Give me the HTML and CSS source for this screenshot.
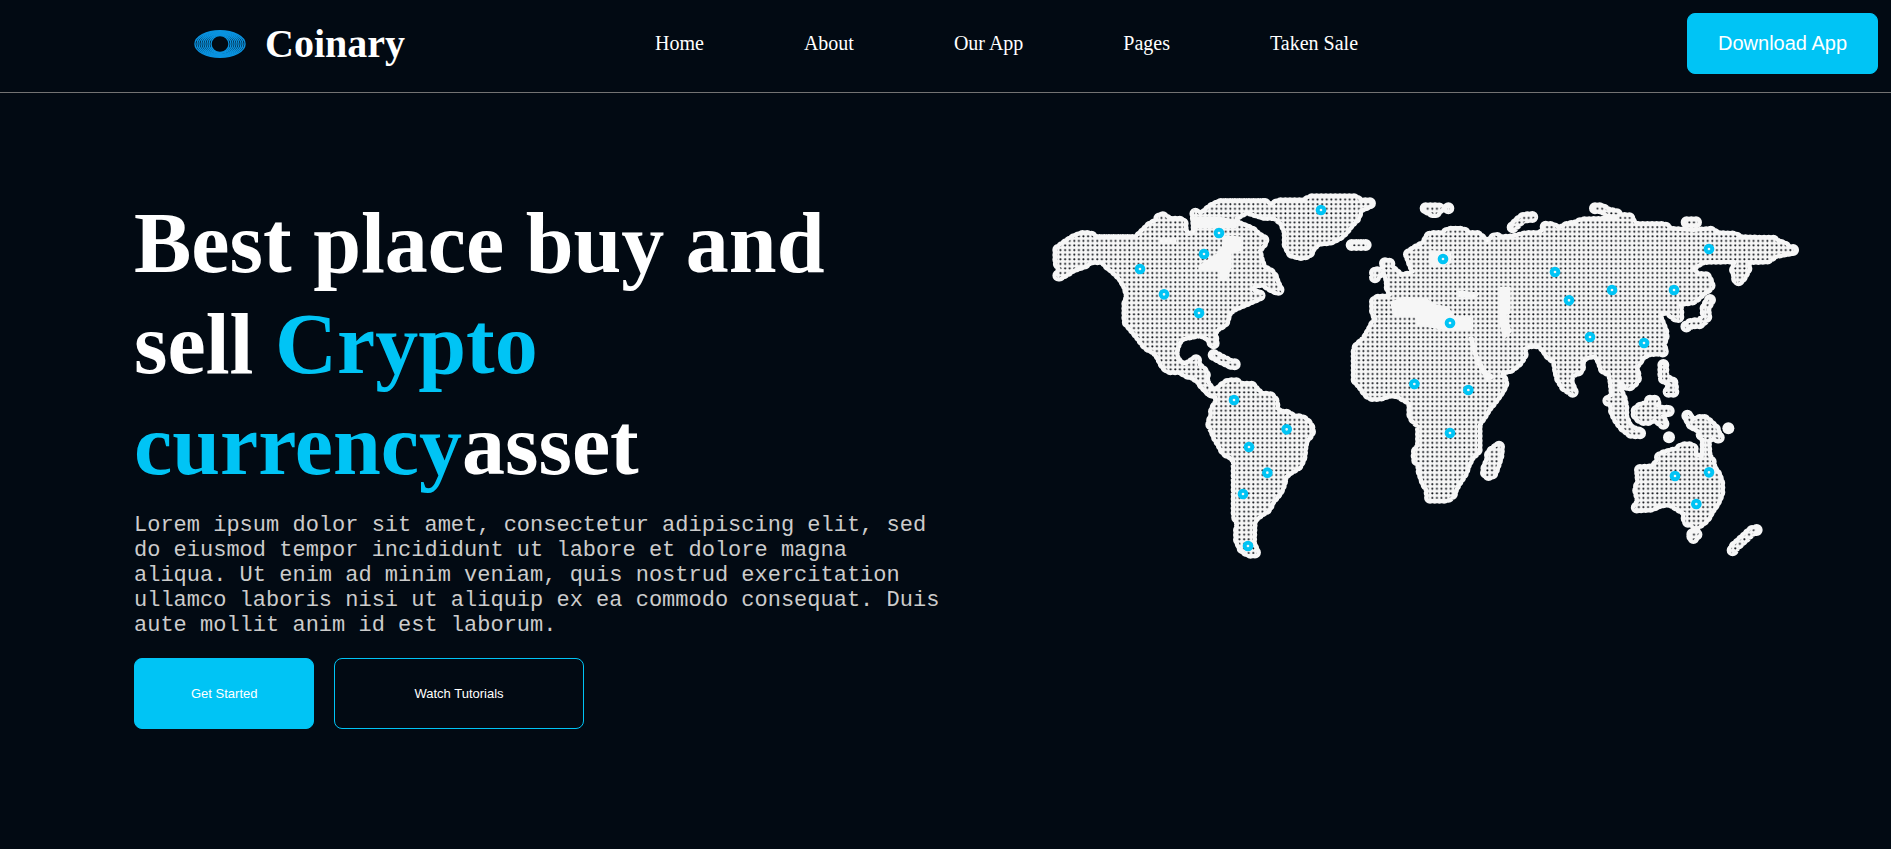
FILE: index.html
```html
<!DOCTYPE html>
<html lang="en">
<head>
<meta charset="utf-8">
<title>Coinary</title>
<link rel="stylesheet" href="styles.css">
</head>
<body>
<header class="header">
  <a class="brand" href="#">
    <svg class="brand-mark" viewBox="0 0 52 28" aria-hidden="true">
      <ellipse cx="26" cy="14" rx="9" ry="8.4"/>
      <ellipse cx="26" cy="14" rx="11" ry="9"/>
      <ellipse cx="26" cy="14" rx="13" ry="9.6"/>
      <ellipse cx="26" cy="14" rx="15" ry="10.2"/>
      <ellipse cx="26" cy="14" rx="17" ry="10.8"/>
      <ellipse cx="26" cy="14" rx="19" ry="11.4"/>
      <ellipse cx="26" cy="14" rx="21" ry="12"/>
      <ellipse cx="26" cy="14" rx="23" ry="12.6"/>
      <ellipse cx="26" cy="14" rx="25" ry="13.2"/>
    </svg>
    <span class="brand-name">Coinary</span>
  </a>
  <nav class="nav">
    <a href="#">Home</a>
    <a href="#">About</a>
    <a href="#">Our App</a>
    <a href="#">Pages</a>
    <a href="#">Taken Sale</a>
  </nav>
  <button class="btn btn-download" type="button">Download App</button>
</header>

<main class="hero">
  <section class="intro">
    <h1>Best place buy and sell <span class="accent">Crypto currency</span>asset</h1>
    <p>Lorem ipsum dolor sit amet, consectetur adipiscing elit, sed do eiusmod tempor incididunt ut labore et dolore magna aliqua. Ut enim ad minim veniam, quis nostrud exercitation ullamco laboris nisi ut aliquip ex ea commodo consequat. Duis aute mollit anim id est laborum.</p>
    <div class="actions">
      <button class="btn btn-start" type="button">Get Started</button>
      <button class="btn btn-watch" type="button">Watch Tutorials</button>
    </div>
  </section>

  <svg class="map" viewBox="3150 579 2256 1104" role="img" aria-label="World map">
    <defs>
      <pattern id="dots" x="3120" y="540" width="13.77" height="13.77" patternUnits="userSpaceOnUse">
        <circle cx="6.5" cy="3.6" r="3.1"/>
      </pattern>
      <g id="land">
        <!-- North America -->
        <g transform="translate(3120 540)">
          <path d="M55 209L97 180 124 168 152 168 165 180 290 180 305 165 318 153 332 138 358 126 358 112 372 112 385 125 428 125 428 153 442 172 468 168 470 140 466 98 480 112 500 98 512 86 540 72 675 72 675 105 650 98 620 88 580 110 580 128 600 140 635 153 650 168 673 182 662 195 650 210 655 235 665 265 690 280 700 292 705 310 717 332 690 320 670 305 640 310 625 325 640 342 660 346 633 358 600 372 575 383 560 400 552 428 530 440 515 457 521 480 521 495 510 470 480 457 455 462 425 468 410 485 400 515 405 540 425 560 440 560 455 550 468 540 470 560 485 570 495 582 492 605 502 620 515 638 490 615 480 600 460 585 440 580 420 568 385 568 372 553 358 525 345 510 320 498 300 470 275 440 262 425 262 370 270 350 262 320 248 295 235 280 222 268 205 255 190 238 150 238 135 250 100 262 80 275 52 291 68 268 55 250Z"/>
          <path d="M521 525L548 540 575 553 593 553"/>
        </g>
        <!-- Greenland, Iceland -->
        <g transform="translate(3750 540)">
          <path d="M45 72L60 85 85 70 165 70 180 58 320 58 325 70 360 70 325 85 322 100 318 112 300 130 285 150 270 165 240 180 205 182 185 200 175 222 150 225 125 218 113 195 113 155 100 125 75 105 40 105Z"/>
          <path d="M305 195H350"/>
        </g>
        <!-- South America -->
        <g transform="translate(3510 1080)">
          <path d="M98 65L112 85 125 98 145 95 160 80 175 70 205 70 205 80 245 80 258 97 275 110 300 110 313 125 313 150 330 163 355 165 370 178 395 178 410 190 420 205 420 220 405 235 398 255 395 290 385 315 360 330 340 345 335 370 325 395 312 410 300 425 292 445 275 455 255 470 245 485 243 550 255 578 235 578 218 565 207 540 207 510 212 490 200 470 200 300 185 285 165 275 155 255 140 230 130 205 122 190 132 170 132 150 148 125 145 105 120 95Z"/>
        </g>
        <!-- Europe, Africa, western Asia -->
        <g transform="translate(4020 570)">
          <path d="M207 193L230 178 255 165 270 138 310 138 325 125 370 125 385 138 415 138 440 165 460 150 465 140 480 150 520 148 560 138 600 138 617 125 617 110 640 112 655 125 668 118 720 110 720 540 690 550 685 575 698 605 675 590 660 565 655 545 650 510 630 498 615 475 600 460 565 460 545 470 548 495 535 515 510 535 480 540 475 565 490 570 490 585 475 610 460 630 440 655 425 680 410 700 410 780 390 800 375 830 372 845 355 870 340 895 335 915 320 923 270 923 268 895 257 880 245 845 243 815 230 810 230 785 243 770 243 705 217 680 217 635 190 620 175 610 150 608 120 618 90 618 75 600 65 585 50 570 50 475 78 450 95 420 105 400 120 388 105 370 105 330 150 327 165 312 150 300 148 280 165 275 190 262 215 258 240 240 225 240 215 215Z"/>
          <path d="M135 220L148 220 148 235 165 248 180 265 150 275 140 245Z"/>
          <path d="M105 248V262L118 245Z"/>
          <path d="M518 112L535 95 550 83 590 80"/>
          <path d="M257 55H298L285 70ZM325 55V68"/>
          <path d="M477 770L476 795 465 830 455 855 438 855 438 838 450 810 450 790Z"/>
        </g>
        <!-- Eastern Asia, Indonesia -->
        <g transform="translate(4680 570)">
          <path d="M20 111L50 105 65 97 145 95 215 97 225 111 290 111 315 111 330 125 400 130 455 125 470 138 525 140 540 150 590 152 640 152 655 165 670 165 685 180 700 180 645 190 625 205 600 207 555 207 560 235 545 262 532 275 530 250 525 240 535 215 525 205 430 207 400 225 385 235 410 260 440 262 450 290 430 300 410 320 395 330 370 332 345 340 355 355 355 385 340 375 325 360 300 360 290 375 300 400 312 430 310 445 300 465 312 485 290 482 265 485 245 495 230 520 215 525 225 545 228 565 218 580 203 590 190 565 170 575 175 605 185 625 190 650 190 680 200 705 215 722 245 730 215 730 190 710 175 690 162 665 162 640 145 632 165 620 163 600 160 570 155 545 133 540 125 515 110 488 75 495 45 525 28 545 20 500Z"/>
          <path d="M105 55L125 55 145 68 170 72 180 83 215 85"/>
          <path d="M380 97H412"/>
          <path d="M450 330L435 358 440 380 420 400 395 400 375 412" class="chain"/>
          <path d="M310 525V565L338 578 340 605 325 605 338 585"/>
          <path d="M230 662L245 650 265 648 270 632 290 632 280 650 300 662 330 662 295 672 312 703 285 680 265 690 245 690 230 675Z"/>
          <path d="M327 742h1"/>
        </g>
        <!-- Oceania -->
        <g transform="translate(4770 1020)">
          <path d="M292 227L305 252 325 240 345 240 358 252 375 268 380 285 390 297 370 285 350 295 335 285 335 268 310 255Z"/>
          <path d="M415 265h1"/>
          <path d="M150 390L190 388 210 365 210 350 240 340 265 335 275 322 308 322 308 352 345 362 347 322 347 300 350 350 362 365 365 385 380 405 388 430 388 460 375 490 360 510 350 530 335 545 318 557 305 545 290 545 290 515 265 500 240 485 210 488 185 500 140 503 153 485 143 445 153 430Z"/>
          <path d="M307 583H320L307 598Z"/>
          <path d="M500 570L485 573 460 597 440 615 428 625 428 640"/>
        </g>
      </g>
      <mask id="land-mask" maskUnits="userSpaceOnUse" x="3120" y="540" width="2320" height="1200">
        <use href="#land" class="mask-shape"/>
      </mask>
    </defs>
    <use href="#land" class="coast"/>
    <rect x="3120" y="540" width="2320" height="1200" class="dots" mask="url(#land-mask)"/>
    <!-- Inland seas and lakes without dots -->
    <g class="sea">
      <path transform="translate(3120 540)" d="M458 110L540 110 590 120 590 145 530 145 455 145ZM550 165L610 170 608 212 575 220 575 262 560 300 540 300 540 272 475 270 475 258 500 240 530 220 545 200ZM360 176H408V190H360Z"/>
      <path transform="translate(4020 570)" d="M150 335L190 320 262 325 275 340 325 350 345 380 400 380 400 420 320 422 230 405 225 382 160 378ZM350 300L420 308 408 325 350 322ZM478 290H512V370L500 375 515 425 490 450 478 400ZM385 440H400L412 490 440 545 470 560 440 575 405 515ZM270 180L335 185 335 220 280 235 265 215Z"/>
    </g>
    <g class="pins">
      <g transform="translate(3120 540)"><circle cx="537" cy="159" r="10"/><circle cx="492" cy="222" r="10"/><circle cx="300" cy="267" r="10"/><circle cx="372" cy="343" r="10"/><circle cx="477" cy="399" r="10"/></g>
      <g transform="translate(3750 540)"><circle cx="213" cy="90" r="10"/></g>
      <g transform="translate(4020 570)"><circle cx="309" cy="207" r="10"/><circle cx="645" cy="246" r="10"/><circle cx="687" cy="331" r="10"/><circle cx="330" cy="399" r="10"/><circle cx="223" cy="582" r="10"/><circle cx="385" cy="600" r="10"/><circle cx="330" cy="729" r="10"/></g>
      <g transform="translate(4680 570)"><circle cx="447" cy="177" r="10"/><circle cx="156" cy="300" r="10"/><circle cx="342" cy="300" r="10"/><circle cx="90" cy="441" r="10"/><circle cx="252" cy="459" r="10"/></g>
      <g transform="translate(3510 1080)"><circle cx="192" cy="120" r="10"/><circle cx="350" cy="208" r="10"/><circle cx="237" cy="261" r="10"/><circle cx="292" cy="338" r="10"/><circle cx="219" cy="402" r="10"/><circle cx="234" cy="558" r="10"/></g>
      <g transform="translate(4770 1020)"><circle cx="255" cy="408" r="10"/><circle cx="357" cy="397" r="10"/><circle cx="319" cy="492" r="10"/></g>
    </g>
  </svg>
</main>
</body>
</html>
```

FILE: styles.css
```css
* {
  box-sizing: border-box;
}

body {
  margin: 0;
  min-height: 100vh;
  background: #020a13;
  color: #fff;
  font-family: "Liberation Serif", "Times New Roman", serif;
}

.header {
  display: flex;
  align-items: center;
  padding: 13px 13px 18px 194px;
  border-bottom: 1px solid #737373;
}

.brand {
  display: flex;
  align-items: center;
  gap: 19px;
  color: #fff;
  text-decoration: none;
}

.brand-mark {
  width: 52px;
  height: 28px;
  fill: none;
  stroke: #0a93e0;
  stroke-width: 1.4;
}

.brand-name {
  font-size: 40px;
  font-weight: 700;
  line-height: 46px;
}

.nav {
  display: flex;
  gap: 100px;
  margin-left: 250px;
}

.nav a {
  color: #fff;
  font-size: 20px;
  text-decoration: none;
  white-space: nowrap;
}

.btn {
  border: 1px solid #00c4f5;
  border-radius: 8px;
  background: #00c4f5;
  color: #fff;
  font-family: "Liberation Sans", Arial, sans-serif;
  font-size: 13px;
  white-space: nowrap;
}

.btn-download {
  margin-left: auto;
  padding: 18px 30px;
  font-size: 20px;
}

.hero {
  display: flex;
  align-items: flex-start;
  justify-content: space-between;
  gap: 32px;
  padding: 100px 89px 64px 134px;
}

.intro {
  flex: 0 1 812px;
}

h1 {
  margin: 0 0 17px;
  font-size: 86px;
  font-weight: 700;
  line-height: 101px;
}

.accent {
  color: #00c4f5;
}

.intro p {
  margin: 0 0 20px;
  color: #ccc;
  font-family: "Liberation Mono", "Courier New", monospace;
  font-size: 22px;
  line-height: 25px;
}

.actions {
  display: flex;
  gap: 20px;
}

.btn-start {
  padding: 27px 56px;
}

.btn-watch {
  padding: 27px 79px;
  background: transparent;
}

.map {
  flex: 0 1 752px;
  min-width: 0;
  overflow: visible;
}

.coast {
  fill: #f6f6f6;
  stroke: #f6f6f6;
  stroke-width: 36;
  stroke-linecap: round;
  stroke-linejoin: round;
  stroke-dasharray: 0 14;
}

.chain {
  fill: none;
}

.mask-shape {
  fill: #fff;
  stroke: #fff;
  stroke-width: 8;
}

.dots {
  fill: url(#dots);
}

#dots circle {
  fill: #05090f;
}

.sea {
  fill: #f6f6f6;
}

.pins circle {
  fill: #f6f6f6;
  stroke: #00c4f5;
  stroke-width: 12;
}
```
